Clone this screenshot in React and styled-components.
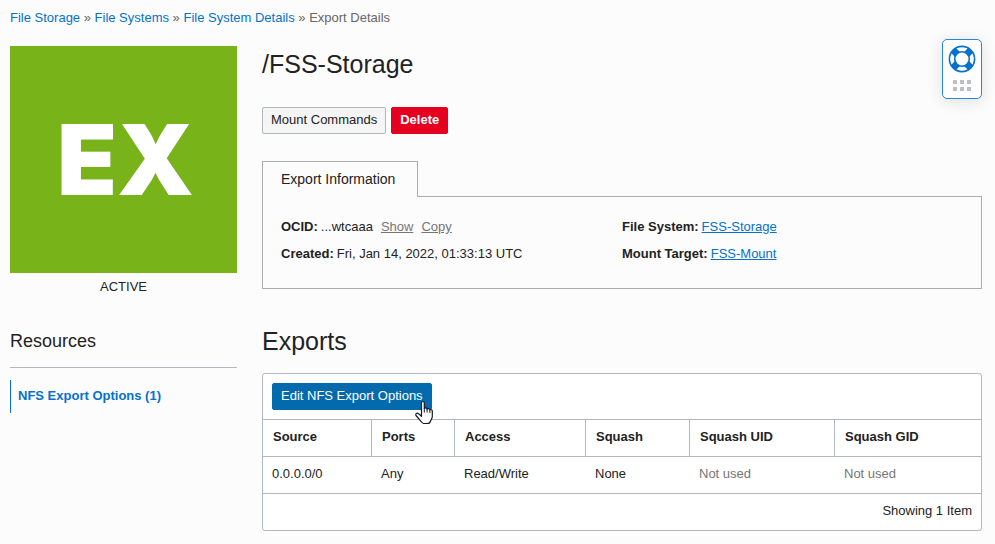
import React from "react";
import styled, { createGlobalStyle } from "styled-components";

const Global = createGlobalStyle`
  *, *::before, *::after { box-sizing: border-box; }
  body {
    margin: 0;
    background: #fcfcfc;
    color: #222;
    font-family: "Liberation Sans", Arial, sans-serif;
    font-size: 13px;
    line-height: 16px;
  }
  button { font: inherit; cursor: pointer; }
`;

const Page = styled.div`
  padding: 10px 13px 13px 10px;
`;

const Breadcrumbs = styled.nav`
  color: #666;
  margin-bottom: 20px;
`;

const Link = styled.a`
  color: ${(p) => (p.$muted ? "#767676" : "#0572ce")};
  text-decoration: ${(p) => (p.$underline ? "underline" : "none")};
`;

const Columns = styled.div`
  display: grid;
  grid-template-columns: 227px minmax(0, 1fr);
  column-gap: 25px;
`;

const StatusTile = styled.div`
  display: flex;
  align-items: center;
  justify-content: center;
  aspect-ratio: 1;
  padding-left: 4px;
  background: #78b31a;
  color: #fff;
  font-family: Inter, sans-serif;
  font-size: 98px;
  font-weight: 900;
  line-height: 96px;
`;

const StatusLabel = styled.div`
  margin-top: 6px;
  text-align: center;
`;

const ResourcesTitle = styled.h2`
  margin: 34px 0 0;
  padding-bottom: 14px;
  border-bottom: 1px solid #b0b7c3;
  font-size: 18px;
  font-weight: 400;
  line-height: 24px;
`;

const ResourceLink = styled.a`
  display: block;
  margin-top: 12px;
  padding: 8px 7px 9px;
  border-left: 1px solid #0572ce;
  color: #0572ce;
  font-weight: 700;
  text-decoration: none;
`;

const TitleRow = styled.div`
  display: flex;
  justify-content: space-between;
  height: 61px;
`;

const Title = styled.h1`
  margin: 2px 0 0;
  font-size: 25px;
  font-weight: 400;
  line-height: 32px;
`;

const SectionTitle = styled.h2`
  margin: 36px 0 16px;
  font-size: 25px;
  font-weight: 400;
  line-height: 32px;
`;

const HelpButton = styled.button`
  display: flex;
  flex-direction: column;
  align-items: center;
  gap: 7px;
  width: 40px;
  height: 60px;
  margin-top: -7px;
  padding: 5px 0 0;
  border: 1px solid #2a86d6;
  border-radius: 5px;
  background: #fff;
  box-shadow: 0 2px 16px rgba(0, 0, 0, 0.12);
`;

const Actions = styled.div`
  display: flex;
  gap: 5px;
`;

const buttonTones = {
  plain: { bg: "#f5f5f5", fg: "#222", line: "#b0b7c3" },
  danger: { bg: "#e6001f", fg: "#fff", line: "#e6001f" },
  primary: { bg: "#036bad", fg: "#fff", line: "#036bad" },
};

const Button = styled.button`
  height: 27px;
  padding: 0 8px 2px;
  border: 1px solid ${(p) => buttonTones[p.$tone].line};
  border-radius: 2px;
  background: ${(p) => buttonTones[p.$tone].bg};
  color: ${(p) => buttonTones[p.$tone].fg};
  font-weight: ${(p) => (p.$strong ? 700 : 400)};
`;

const TabBar = styled.div`
  display: flex;
  margin-top: 27px;
`;

const Tab = styled.button`
  min-width: 156px;
  height: 36px;
  padding: 0 18px 2px;
  border: 1px solid #adadad;
  border-bottom: 0;
  background: #fcfcfc;
  color: #222;
  font-size: 14px;
  text-align: left;
`;

const TabFiller = styled.div`
  flex: 1;
  border-bottom: 1px solid #adadad;
`;

const TabPanel = styled.section`
  display: grid;
  grid-template-columns: repeat(2, minmax(0, 1fr));
  border: 1px solid #adadad;
  border-top: 0;
  padding: 22px 18px 26px;
`;

const Facts = styled.dl`
  display: flex;
  flex-direction: column;
  gap: 11px;
  margin: 0;
`;

const Fact = styled.div`
  display: flex;
  gap: 3px;
  dt { font-weight: 700; }
  dd { display: flex; gap: 8px; margin: 0; }
`;

const TableCard = styled.div`
  border: 1px solid #b0b7c3;
  border-radius: 3px;
  background: #fff;
`;

const Toolbar = styled.div`
  display: flex;
  padding: 9px;
`;

const PointerTarget = styled.div`
  position: relative;
  display: flex;
`;

const Cursor = styled.svg`
  position: absolute;
  right: -2px;
  bottom: -15px;
  pointer-events: none;
`;

const Table = styled.table`
  width: 100%;
  table-layout: fixed;
  border-collapse: separate;
  border-spacing: 0;
`;

const HeadCell = styled.th`
  width: ${(p) => p.$width};
  height: 37px;
  padding: 0 10px 3px;
  border-top: 1px solid #b0b7c3;
  border-right: 1px solid #b0b7c3;
  text-align: left;
  &:last-child { border-right: 0; }
`;

const Cell = styled.td`
  height: 37px;
  padding: 0 9px 3px;
  border-top: 1px solid #b0b7c3;
  color: ${(p) => (p.$muted ? "#767676" : "#222")};
`;

const TableFooter = styled.div`
  padding: 9px 9px 11px;
  border-top: 1px solid #b0b7c3;
  text-align: right;
`;

const crumbs = ["File Storage", "File Systems", "File System Details"];

const columns = [
  { label: "Source", width: "109px", value: "0.0.0.0/0" },
  { label: "Ports", width: "83px", value: "Any" },
  { label: "Access", width: "131px", value: "Read/Write" },
  { label: "Squash", width: "104px", value: "None" },
  { label: "Squash UID", width: "145px", value: "Not used", muted: true },
  { label: "Squash GID", width: "auto", value: "Not used", muted: true },
];

function LifeRing() {
  return (
    <svg width="28" height="28" viewBox="0 0 28 28" fill="none" aria-hidden="true">
      <path
        d="M5 5l5 5M23 5l-5 5M5 23l5-5M23 23l-5-5"
        stroke="#0572ce"
        strokeWidth="7"
      />
      <circle cx="14" cy="14" r="16" stroke="#fff" strokeWidth="5" />
      <circle cx="14" cy="14" r="12.6" stroke="#0572ce" strokeWidth="1.6" />
      <circle cx="14" cy="14" r="7.3" fill="#fff" stroke="#0572ce" strokeWidth="1.6" />
    </svg>
  );
}

function DragDots() {
  return (
    <svg width="18" height="11" viewBox="0 0 18 11" fill="#bcbfc4" aria-hidden="true">
      {[0, 7, 14].map((x) =>
        [0, 7].map((y) => <rect key={`${x}-${y}`} x={x} y={y} width="4" height="4" />)
      )}
    </svg>
  );
}

function HandCursor() {
  return (
    <Cursor width="20" height="25" viewBox="0 0 20 25" aria-hidden="true">
      <path
        d="M7.5 13.500V3c0-2 2.800-2 2.800 0v5.500c.6-1 2.600-.8 2.800.6.7-.9 2.700-.6 2.800.8.8-.7 2.400-.2 2.400 1.200v5.400c0 2-1.300 3-1.700 4.500-.5 1.600-1.200 2.500-3 2.500H9.700c-1.400-.1-1.900-1-2.700-2.200L2 15.500c-1-1.600 1-3.200 2.600-1.800l2.900 2.600z"
        fill="#fff"
        stroke="#161625"
        strokeWidth="1.2"
        strokeLinejoin="round"
      />
      <path d="M10.300 8.500v4M13.100 9v3.500M15.900 10v3" stroke="#161625" fill="none" />
    </Cursor>
  );
}

export default function App() {
  return (
    <Page>
      <Global />
      <Breadcrumbs aria-label="Breadcrumb">
        {crumbs.map((name) => (
          <React.Fragment key={name}>
            <Link href="#">{name}</Link>
            {" » "}
          </React.Fragment>
        ))}
        Export Details
      </Breadcrumbs>
      <Columns>
        <aside>
          <StatusTile>EX</StatusTile>
          <StatusLabel>ACTIVE</StatusLabel>
          <ResourcesTitle>Resources</ResourcesTitle>
          <ResourceLink href="#">NFS Export Options (1)</ResourceLink>
        </aside>
        <main>
          <TitleRow>
            <Title>/FSS-Storage</Title>
            <HelpButton type="button" aria-label="Help">
              <LifeRing />
              <DragDots />
            </HelpButton>
          </TitleRow>
          <Actions>
            <Button type="button" $tone="plain">Mount Commands</Button>
            <Button type="button" $tone="danger" $strong>Delete</Button>
          </Actions>
          <TabBar role="tablist">
            <Tab type="button" role="tab" aria-selected="true">Export Information</Tab>
            <TabFiller />
          </TabBar>
          <TabPanel role="tabpanel">
            <Facts>
              <Fact>
                <dt>OCID:</dt>
                <dd>
                  <span>...wtcaaa</span>
                  <Link href="#" $muted $underline>Show</Link>
                  <Link href="#" $muted $underline>Copy</Link>
                </dd>
              </Fact>
              <Fact>
                <dt>Created:</dt>
                <dd>Fri, Jan 14, 2022, 01:33:13 UTC</dd>
              </Fact>
            </Facts>
            <Facts>
              <Fact>
                <dt>File System:</dt>
                <dd><Link href="#" $underline>FSS-Storage</Link></dd>
              </Fact>
              <Fact>
                <dt>Mount Target:</dt>
                <dd><Link href="#" $underline>FSS-Mount</Link></dd>
              </Fact>
            </Facts>
          </TabPanel>
          <SectionTitle>Exports</SectionTitle>
          <TableCard>
            <Toolbar>
              <PointerTarget>
                <Button type="button" $tone="primary">Edit NFS Export Options</Button>
                <HandCursor />
              </PointerTarget>
            </Toolbar>
            <Table>
              <thead>
                <tr>
                  {columns.map((c) => (
                    <HeadCell key={c.label} scope="col" $width={c.width}>{c.label}</HeadCell>
                  ))}
                </tr>
              </thead>
              <tbody>
                <tr>
                  {columns.map((c) => (
                    <Cell key={c.label} $muted={c.muted}>{c.value}</Cell>
                  ))}
                </tr>
              </tbody>
            </Table>
            <TableFooter>Showing 1 Item</TableFooter>
          </TableCard>
        </main>
      </Columns>
    </Page>
  );
}
